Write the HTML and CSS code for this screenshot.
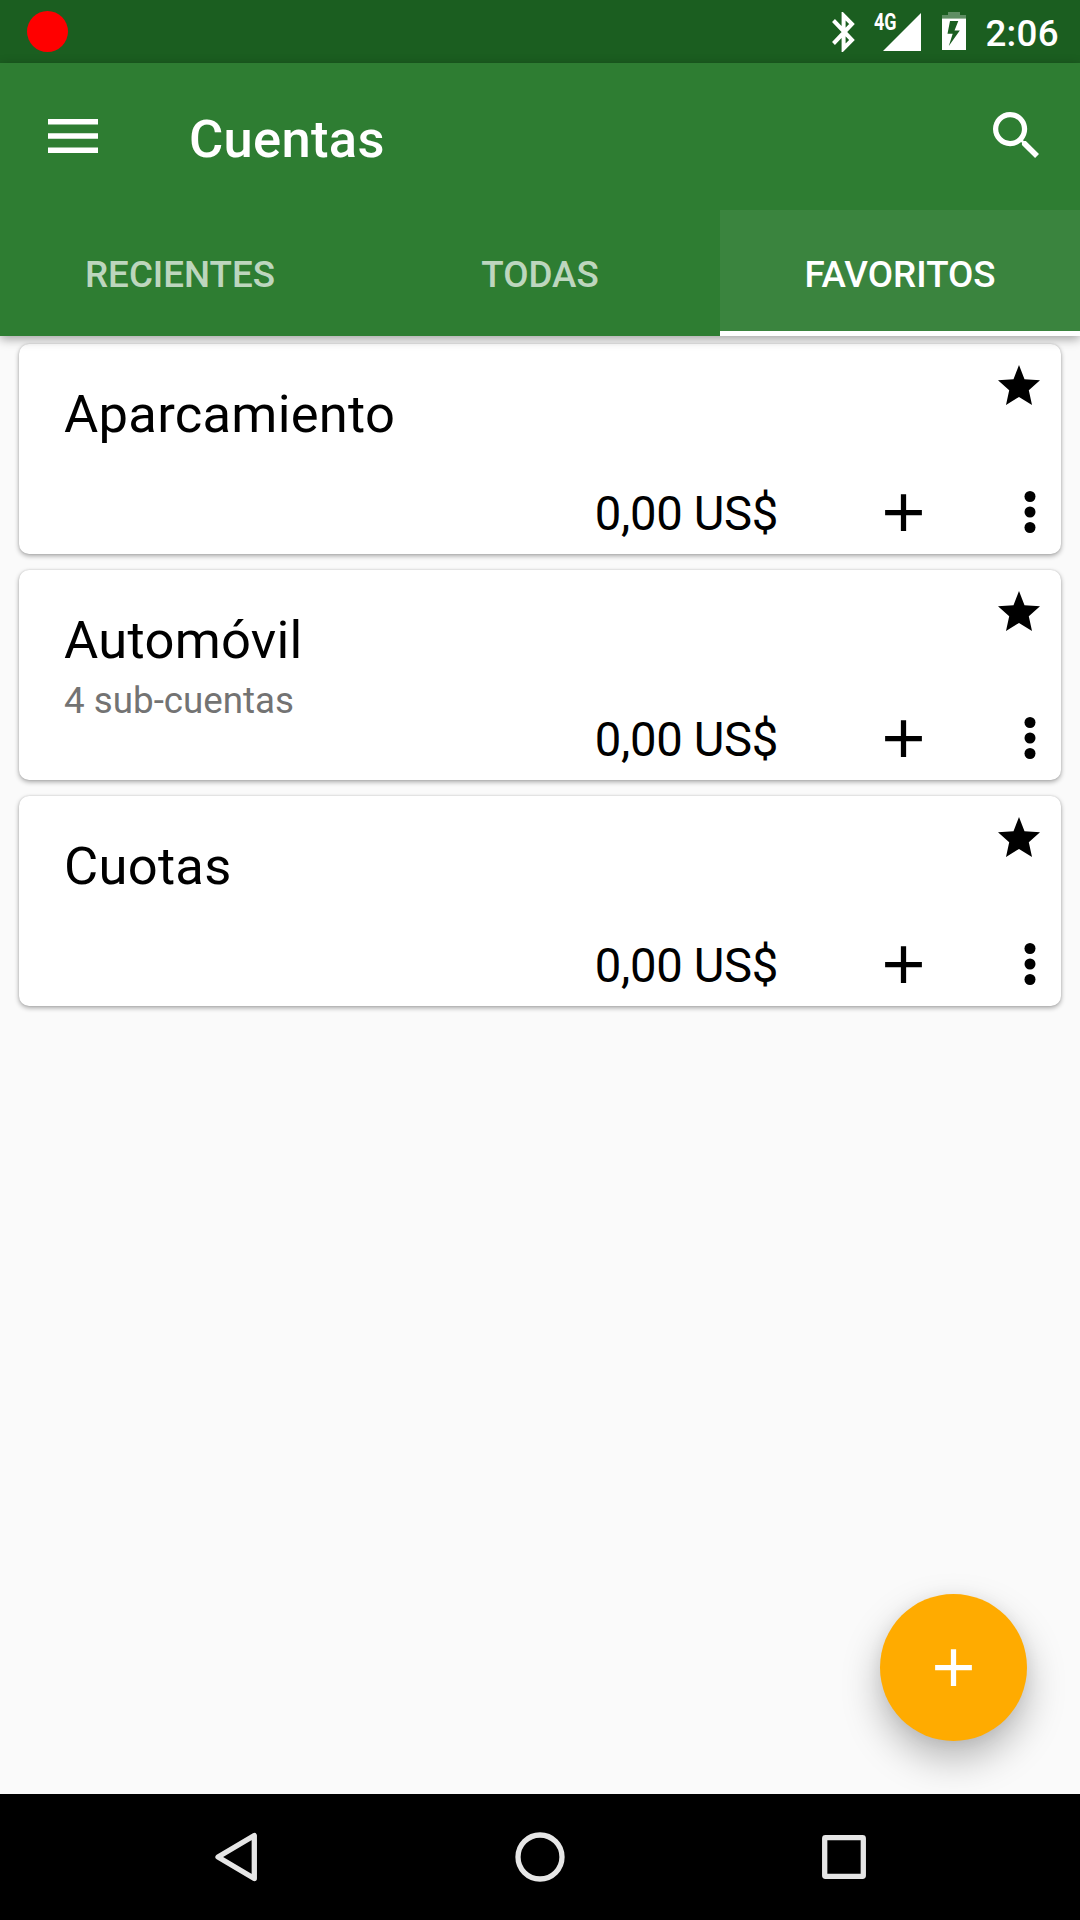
FILE: index.html
```html
<!DOCTYPE html>
<html lang="es">
<head>
<meta charset="utf-8">
<title>Cuentas</title>
<link rel="stylesheet" href="styles.css">
</head>
<body>
<svg class="defs" width="0" height="0" aria-hidden="true">
  <symbol id="plus" viewBox="0 0 24 24"><path d="M19 13h-6v6h-2v-6H5v-2h6V5h2v6h6v2z"/></symbol>
  <symbol id="star" viewBox="0 0 42 40"><path d="M21 0l5.500 14.200L42 15.200 30.800 25.300 34 40l-13-8L8 40l3.200-14.700L0 15.200l15.500-1z"/></symbol>
  <symbol id="more" viewBox="0 0 12 42"><circle cx="6" cy="5.500" r="5.500"/><circle cx="6" cy="21" r="5.500"/><circle cx="6" cy="36.500" r="5.500"/></symbol>
</svg>
<div class="screen">
  <div class="status">
    <span class="record"></span>
    <svg class="bluetooth" viewBox="0 0 25 40"><path d="M2.500 8.500L21 28 12.600 36.500V3.500L21 12 2.500 31.500" fill="none" stroke="#fff" stroke-width="4"/></svg>
    <div class="signal">
      <span class="network">4G</span>
      <svg class="triangle" viewBox="0 0 38 38"><path d="M38 0v38H0z" fill="#fff"/></svg>
    </div>
    <svg class="battery" viewBox="0 0 24 38"><path d="M6 0h12v3h6v3.500H0V3h6z" fill="#fff" fill-opacity=".3"/><path d="M0 6.500h24V38H0zM8 9L5.500 21.800h5.200L6.800 34 17.800 18.500h-5.300L16.300 9z" fill="#fff" fill-rule="evenodd"/></svg>
    <span class="clock">2:06</span>
  </div>
  <header class="appbar">
    <div class="toolbar">
      <svg class="menu" viewBox="0 0 50 34"><path d="M0 0h50v5.600H0zM0 14.200h50v5.600H0zM0 28.400h50V34H0z" fill="#fff"/></svg>
      <h1 class="title">Cuentas</h1>
      <svg class="search" viewBox="3 3 17.490 17.490"><path fill="#fff" d="M15.500 14h-.79l-.28-.27C15.410 12.590 16 11.110 16 9.500 16 5.910 13.090 3 9.500 3S3 5.910 3 9.500 5.910 16 9.500 16c1.610 0 3.090-.59 4.230-1.570l.27.28v.79l5 4.990L20.490 19l-4.990-5zm-6 0C7.010 14 5 11.990 5 9.500S7.010 5 9.500 5 14 7.010 14 9.500 11.990 14 9.500 14z"/></svg>
    </div>
    <nav class="tabs">
      <span class="tab">RECIENTES</span>
      <span class="tab">TODAS</span>
      <span class="tab tab-active">FAVORITOS</span>
    </nav>
  </header>
  <main class="list">
    <article class="card">
      <div class="head"><div><h2 class="name">Aparcamiento</h2></div><svg class="star"><use href="#star"/></svg></div>
      <div class="foot"><span class="amount">0,00 US$</span><svg class="plus"><use href="#plus"/></svg><svg class="more"><use href="#more"/></svg></div>
    </article>
    <article class="card">
      <div class="head"><div><h2 class="name">Automóvil</h2><p class="sub">4 sub-cuentas</p></div><svg class="star"><use href="#star"/></svg></div>
      <div class="foot"><span class="amount">0,00 US$</span><svg class="plus"><use href="#plus"/></svg><svg class="more"><use href="#more"/></svg></div>
    </article>
    <article class="card">
      <div class="head"><div><h2 class="name">Cuotas</h2></div><svg class="star"><use href="#star"/></svg></div>
      <div class="foot"><span class="amount">0,00 US$</span><svg class="plus"><use href="#plus"/></svg><svg class="more"><use href="#more"/></svg></div>
    </article>
    <div class="fab"><svg class="plus"><use href="#plus"/></svg></div>
  </main>
  <footer class="navbar">
    <svg class="back" viewBox="0 0 42 50"><path d="M39.300 3.500v43L3 25z"/></svg>
    <svg class="home" viewBox="0 0 50 50"><circle cx="25" cy="25" r="22"/></svg>
    <svg class="recent" viewBox="0 0 44 44"><rect x="2.700" y="2.700" width="38.600" height="38.600" rx=".8"/></svg>
  </footer>
</div>
</body>
</html>
```
FILE: styles.css
```css
* { box-sizing: border-box; margin: 0; padding: 0; }
body { font-family: Roboto, "Noto Sans", sans-serif; background: #fafafa; color: #000; }
svg { display: block; flex: none; }
.defs { position: absolute; }
.screen { width: 1080px; height: 1920px; display: flex; flex-direction: column; overflow: hidden; }

.status { height: 63px; flex: none; background: #1b5e20; display: flex; align-items: flex-start; padding: 0 21px 0 27px; color: #fff; }
.record { width: 41px; height: 41px; margin-top: 11px; border-radius: 50%; background: #f00; }
.bluetooth { width: 25px; height: 40px; margin: 12px 18px 0 auto; }
.signal { display: flex; margin-right: 21px; }
.network { width: 9px; margin-top: 11px; font-size: 23px; line-height: 24px; font-weight: 700; white-space: nowrap; transform: scaleX(.78); transform-origin: 0 50%; }
.triangle { width: 38px; height: 38px; margin-top: 13px; }
.battery { width: 24px; height: 38px; margin: 12px 19px 0 0; }
.clock { font-size: 36.750px; line-height: 43px; font-weight: 500; letter-spacing: .3px; margin-top: 12px; }

.appbar { position: relative; z-index: 1; flex: none; background: #2e7d32; color: #fff; box-shadow: 0 3px 10px rgba(0,0,0,.36); }
.toolbar { height: 147px; display: flex; align-items: flex-start; padding: 0 41px 0 48px; }
.menu { width: 50px; height: 34px; margin-top: 56px; }
.title { font-size: 52.500px; line-height: 62px; font-weight: 500; letter-spacing: .3px; margin: 45px auto 0 91px; }
.search { width: 46px; height: 46px; margin-top: 49px; }
.tabs { height: 126px; display: grid; grid-template-columns: repeat(3, 1fr); }
.tab { display: flex; align-items: center; justify-content: center; padding-top: 2px; font-size: 36.750px; font-weight: 500; color: rgba(255,255,255,.7); }
.tab-active { background: rgba(255,255,255,.06); color: #fff; box-shadow: inset 0 -5px #fff; }

.list { position: relative; flex: 1; display: flex; flex-direction: column; gap: 16px; padding: 8px 19px 0; }
.card { height: 210px; background: #fff; border-radius: 10px; box-shadow: 0 2px 5px rgba(0,0,0,.33), 0 0 2px rgba(0,0,0,.16); display: flex; flex-direction: column; justify-content: space-between; padding: 21px 21px 15px 45px; }
.head { display: flex; justify-content: space-between; height: 110px; }
.name { font-size: 52.500px; line-height: 62px; font-weight: 400; letter-spacing: .28px; margin-top: 18px; }
.sub { font-size: 36.750px; line-height: 43px; color: #737373; margin-top: 8px; }
.star { width: 42px; height: 40px; }
.foot { display: flex; align-items: center; justify-content: flex-end; height: 56px; margin-bottom: -1px; padding-right: 4px; }
.amount { font-size: 47.250px; line-height: 56px; letter-spacing: -.35px; padding-top: 4px; }
.plus { width: 63px; height: 63px; }
.foot .plus { margin: 0 89px 0 94px; }
.more { width: 12px; height: 42px; }

.fab { position: absolute; left: 880px; bottom: 53px; width: 147px; height: 147px; border-radius: 50%; background: #ffab00; display: flex; align-items: center; justify-content: center; fill: #fff; box-shadow: 0 18px 38px rgba(0,0,0,.27), 0 2px 16px rgba(0,0,0,.06); }

.navbar { height: 126px; flex: none; background: #000; display: flex; align-items: center; padding: 0 214px 0 215px; justify-content: space-between; fill: none; stroke: #e6e6e6; stroke-width: 5.300; stroke-linejoin: round; }
.back { width: 42px; height: 50px; }
.home { width: 50px; height: 50px; }
.recent { width: 44px; height: 44px; }
```
